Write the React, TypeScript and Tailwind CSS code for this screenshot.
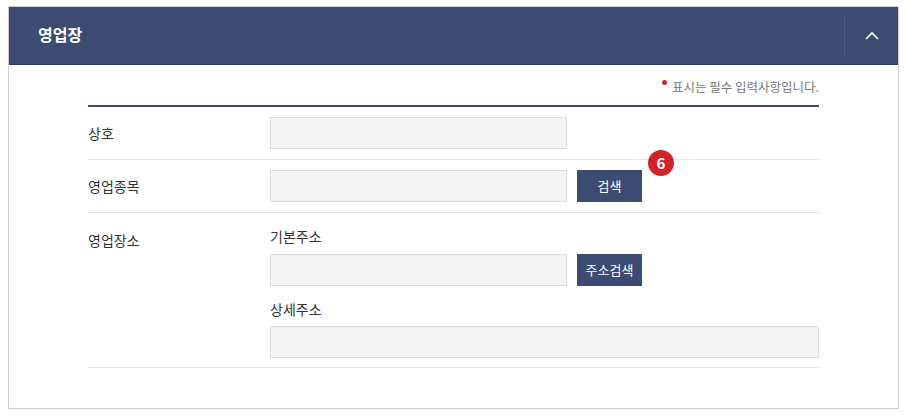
import React from "react";

const font = { fontFamily: '"Noto Sans CJK KR", "Noto Sans", sans-serif' };

function Field({ wide }: { wide?: boolean }) {
  return (
    <div
      className={`h-[32px] border border-[#dcdcdc] bg-[#f3f3f3] ${wide ? "w-full" : "w-[297px]"}`}
    />
  );
}

function NavyButton({ children, width }: { children: string; width: string }) {
  return (
    <button className={`h-[32px] ${width} bg-[#3d4a72] text-[13px] text-white`}>
      {children}
    </button>
  );
}

export default function App() {
  return (
    <div className="bg-white pl-[8px] pt-[6px]" style={font}>
      <div className="w-[891px] border border-[#cfcfcf]">
        <div className="flex h-[58px] items-center justify-between border-b border-[#2c3860] bg-[#3d4a72]">
          <h2 className="pb-[3px] pl-[29px] text-[16px] font-bold text-white">영업장</h2>
          <div className="flex h-[40px] w-[54px] items-center justify-center border-l border-[#4d5a82]">
            <svg width="16" height="10" viewBox="0 0 16 10" fill="none">
              <path d="M2 8 L8 2 L14 8" stroke="white" strokeWidth="1.7" />
            </svg>
          </div>
        </div>
        <div className="px-[79px] pb-[40px]">
          <div className="flex h-[40px] items-center justify-end pt-[4px] text-[12.5px] text-[#777]">
            <span className="mb-[10px] mr-[5px] h-[5px] w-[5px] rounded-full bg-[#d2232a]" />
            표시는 필수 입력사항입니다.
          </div>
          <div className="border-t-2 border-[#3d4a72] text-[14px] text-[#333]">
            <div className="flex items-center border-b border-[#e6e6e6] py-[10px]">
              <div className="w-[182px]">상호</div>
              <Field />
            </div>
            <div className="relative flex items-center border-b border-[#e6e6e6] py-[10px]">
              <div className="w-[182px]">영업종목</div>
              <Field />
              <div className="ml-[10px]">
                <NavyButton width="w-[65px]">검색</NavyButton>
              </div>
              <div className="absolute left-[560px] top-[-10px] flex h-[26px] w-[26px] items-center justify-center rounded-full bg-[#d2232a] text-[15px] font-bold text-white">
                6
              </div>
            </div>
            <div className="flex border-b border-[#e6e6e6] pb-[9px] pt-[12px]">
              <div className="w-[182px] pt-[5px]">영업장소</div>
              <div className="flex-1">
                <div className="h-[22px] leading-[22px]">기본주소</div>
                <div className="mt-[7px] flex items-center gap-[10px]">
                  <Field />
                  <NavyButton width="w-[65px]">주소검색</NavyButton>
                </div>
                <div className="mt-[12px] h-[22px] leading-[22px]">상세주소</div>
                <div className="mt-[6px]">
                  <Field wide />
                </div>
              </div>
            </div>
          </div>
        </div>
      </div>
    </div>
  );
}
